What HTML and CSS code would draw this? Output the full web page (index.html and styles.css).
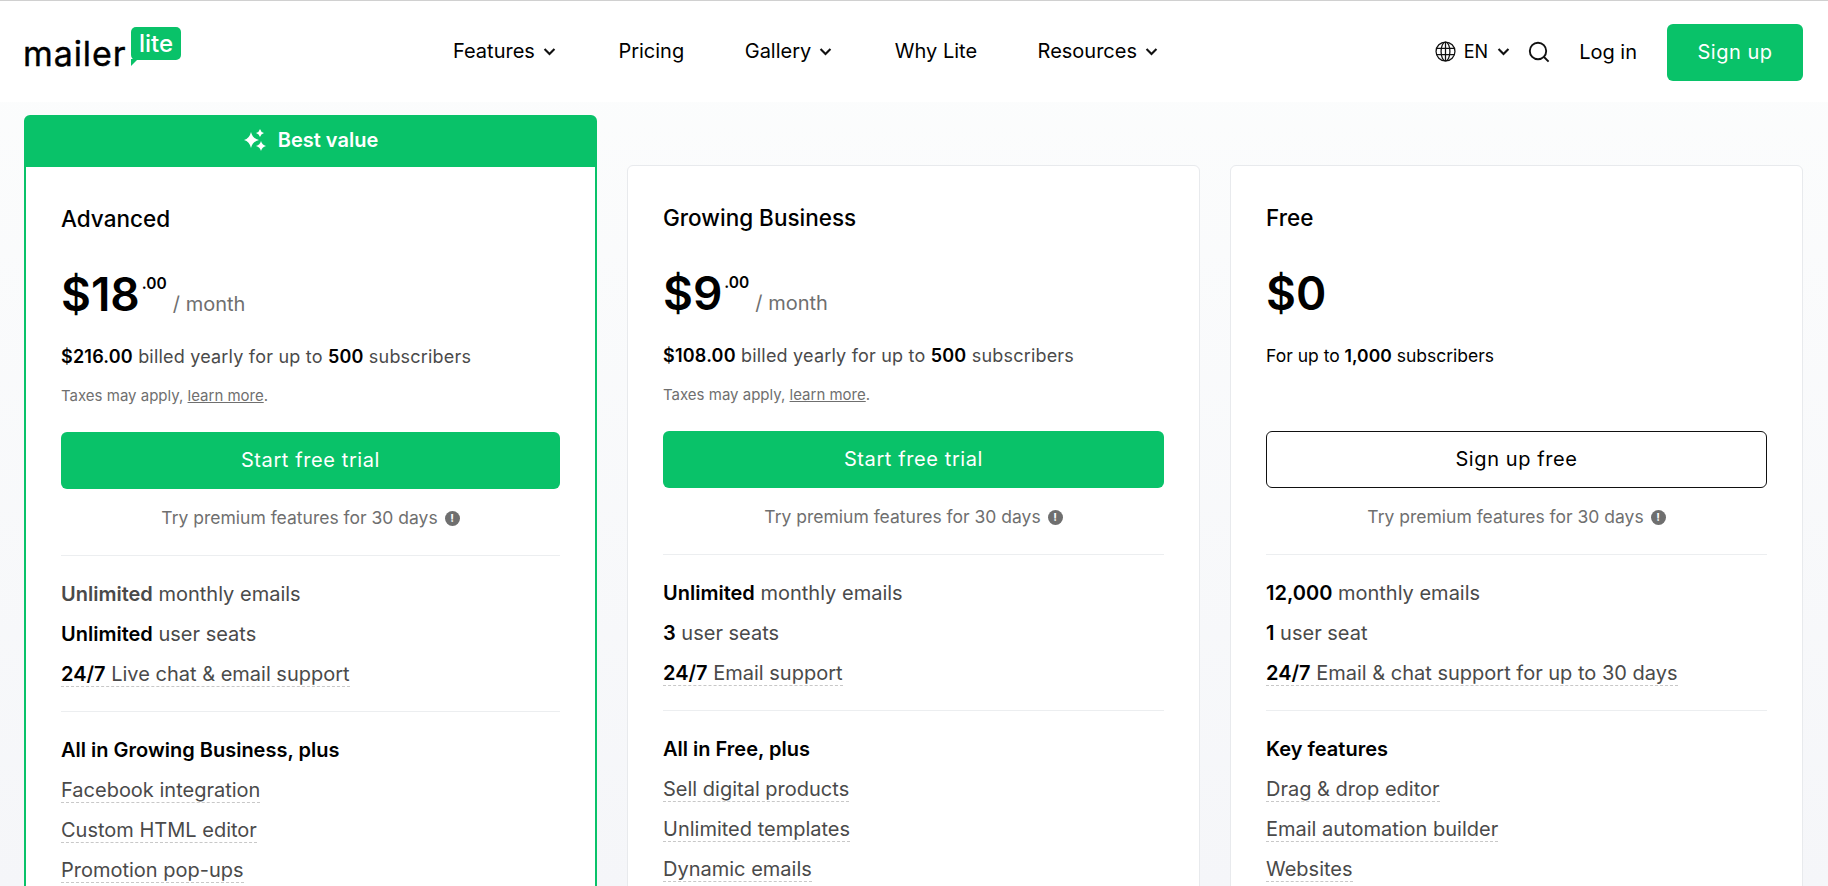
FILE: index.html
```html
<!DOCTYPE html>
<html lang="en">
<head>
    <meta charset="UTF-8">
    <meta name="viewport" content="width=device-width, initial-scale=1.0">
    <title>MailerLite Pricing</title>
    <link rel="stylesheet" href="styles.css">
</head>
<body>
    <!-- Header -->
    <header class="header">
        <a class="logo" href="#">
            <span class="logo-word">mailer</span>
            <span class="logo-bubble">lite</span>
        </a>
        <nav class="nav">
            <a href="#">Features <svg class="chevron" viewBox="0 0 12 12"><path d="M2.500 4.200 6 7.700l3.500-3.500"/></svg></a>
            <a href="#">Pricing</a>
            <a href="#">Gallery <svg class="chevron" viewBox="0 0 12 12"><path d="M2.500 4.200 6 7.700l3.500-3.500"/></svg></a>
            <a href="#">Why Lite</a>
            <a href="#">Resources <svg class="chevron" viewBox="0 0 12 12"><path d="M2.500 4.200 6 7.700l3.500-3.500"/></svg></a>
        </nav>
        <div class="header-right">
            <a class="lang" href="#">
                <svg class="globe" viewBox="0 0 20 20"><circle cx="10" cy="10" r="9"/><ellipse cx="10" cy="10" rx="4.200" ry="9"/><path d="M10 1v18M1.600 7h16.800M1.600 13h16.800"/></svg>
                EN
                <svg class="chevron" viewBox="0 0 12 12"><path d="M2.500 4.200 6 7.700l3.500-3.500"/></svg>
            </a>
            <a class="search" href="#"><svg viewBox="0 0 22 22"><circle cx="10" cy="10" r="8.200"/><path d="m16 16 4.600 4.600"/></svg></a>
            <a class="login" href="#">Log in</a>
            <a class="signup" href="#">Sign up</a>
        </div>
    </header>

    <!-- Plans -->
    <main class="plans">
        <section class="plan plan-best">
            <div class="best-label">
                <svg class="sparkle" viewBox="0 0 24 24"><path d="M8 4Q9.500 10.500 16 12 9.500 13.500 8 20 6.500 13.500 1 12 6.500 10.500 8 4ZM17 1Q17.800 4.200 21 5 17.800 5.800 17 9 16.200 5.800 13 5 16.200 4.200 17 1ZM18 13Q19 17 23 18 19 19 18 23 17 19 13 18 17 17 18 13Z"/></svg>
                Best value
            </div>
            <div class="plan-body">
                <h2 class="plan-name">Advanced</h2>
                <div class="price"><span class="amount">$18</span><span class="cents">.00</span><span class="period">/ month</span></div>
                <p class="billing"><b>$216.00</b> billed yearly for up to <b>500</b> subscribers</p>
                <p class="taxes">Taxes may apply, <a href="#">learn more</a>.</p>
                <a class="btn btn-green" href="#">Start free trial</a>
                <p class="trial">Try premium features for 30 days <span class="info">!</span></p>
                <hr>
                <ul class="list">
                    <li class="soft"><b>Unlimited</b> monthly emails</li>
                    <li><b>Unlimited</b> user seats</li>
                    <li><span class="dash"><b>24/7</b> Live chat &amp; email support</span></li>
                </ul>
                <hr>
                <ul class="list">
                    <li class="list-title">All in Growing Business, plus</li>
                    <li><span class="dash">Facebook integration</span></li>
                    <li><span class="dash">Custom HTML editor</span></li>
                    <li><span class="dash">Promotion pop-ups</span></li>
                </ul>
            </div>
        </section>

        <section class="plan">
            <div class="plan-body">
                <h2 class="plan-name">Growing Business</h2>
                <div class="price"><span class="amount">$9</span><span class="cents">.00</span><span class="period">/ month</span></div>
                <p class="billing"><b>$108.00</b> billed yearly for up to <b>500</b> subscribers</p>
                <p class="taxes">Taxes may apply, <a href="#">learn more</a>.</p>
                <a class="btn btn-green" href="#">Start free trial</a>
                <p class="trial">Try premium features for 30 days <span class="info">!</span></p>
                <hr>
                <ul class="list">
                    <li><b>Unlimited</b> monthly emails</li>
                    <li><b>3</b> user seats</li>
                    <li><span class="dash"><b>24/7</b> Email support</span></li>
                </ul>
                <hr>
                <ul class="list">
                    <li class="list-title">All in Free, plus</li>
                    <li><span class="dash">Sell digital products</span></li>
                    <li><span class="dash">Unlimited templates</span></li>
                    <li><span class="dash">Dynamic emails</span></li>
                </ul>
            </div>
        </section>

        <section class="plan">
            <div class="plan-body">
                <h2 class="plan-name">Free</h2>
                <div class="price"><span class="amount">$0</span></div>
                <p class="billing billing-free">For up to <b>1,000</b> subscribers</p>
                <p class="taxes taxes-empty"></p>
                <a class="btn btn-outline" href="#">Sign up free</a>
                <p class="trial">Try premium features for 30 days <span class="info">!</span></p>
                <hr>
                <ul class="list">
                    <li><b>12,000</b> monthly emails</li>
                    <li><b>1</b> user seat</li>
                    <li><span class="dash"><b>24/7</b> Email &amp; chat support for up to 30 days</span></li>
                </ul>
                <hr>
                <ul class="list">
                    <li class="list-title">Key features</li>
                    <li><span class="dash">Drag &amp; drop editor</span></li>
                    <li><span class="dash">Email automation builder</span></li>
                    <li><span class="dash">Websites</span></li>
                </ul>
            </div>
        </section>
    </main>
</body>
</html>
```

FILE: styles.css
```css
* {
    box-sizing: border-box;
}

html, body {
    height: 100%;
}

body {
    margin: 0;
    display: flex;
    flex-direction: column;
    overflow: hidden;
    font-family: Inter, "Liberation Sans", sans-serif;
    color: #000;
    background: linear-gradient(#fcfdfd, #f5f6f9);
}

a {
    color: inherit;
    text-decoration: none;
}

/* Header */
.header {
    flex: none;
    display: flex;
    align-items: center;
    height: 102px;
    padding: 0 25px 0 23px;
    background-color: white;
    border-top: 1px solid #d0d0d0;
}

.logo {
    display: flex;
    align-items: flex-end;
    gap: 5px;
    width: 430px;
    margin-top: -4px;
}

.logo-word {
    width: 103px;
    margin-bottom: 1px;
    font-size: 34px;
    font-weight: 400;
    -webkit-text-stroke: 0.4px #000;
    line-height: 34px;
    letter-spacing: 0.9px;
}

.logo-bubble {
    position: relative;
    width: 50px;
    height: 33px;
    margin-bottom: 12px;
    padding-left: 8px;
    font-size: 24px;
    font-weight: 500;
    line-height: 33px;
    color: white;
    background-color: #09c269;
    border-radius: 5px;
}

.logo-bubble::after {
    content: "";
    position: absolute;
    left: 0;
    top: 32px;
    border-top: 7px solid #09c269;
    border-right: 7px solid transparent;
}

.nav {
    display: flex;
    align-items: center;
    gap: 60.500px;
    font-size: 20px;
    margin-top: -1px;
}

.nav a {
    display: flex;
    align-items: center;
    gap: 6px;
}

.chevron {
    width: 17px;
    height: 17px;
    fill: none;
    stroke: #111;
    stroke-width: 1.500;
}

.header-right {
    display: flex;
    align-items: center;
    margin-left: auto;
}

.lang {
    display: flex;
    align-items: center;
    gap: 8px;
    font-size: 18px;
}

.globe {
    width: 21px;
    height: 21px;
    fill: none;
    stroke: #111;
    stroke-width: 1.200;
}

.lang .chevron {
    margin-left: -1px;
}

.search {
    display: flex;
    margin-left: 16px;
}

.search svg {
    width: 22px;
    height: 22px;
    fill: none;
    stroke: #111;
    stroke-width: 1.900;
}

.login {
    margin-left: 29px;
    font-size: 20px;
}

.signup {
    display: flex;
    align-items: center;
    justify-content: center;
    width: 136px;
    height: 57px;
    margin: 2px 0 0 30px;
    padding-bottom: 2px;
    font-size: 20px;
    letter-spacing: 0.5px;
    color: white;
    background-color: #09c269;
    border-radius: 6px;
}

/* Plans */
.plans {
    flex: 1;
    display: grid;
    grid-template-columns: repeat(3, 573px);
    justify-content: space-between;
    min-height: 0;
    padding: 13px 25px 0 24px;
}

.plan {
    margin-top: 50px;
    margin-bottom: -20px;
    background-color: white;
    border: 1px solid #e8eaed;
    border-radius: 6px;
}

.plan-best {
    margin-top: 0;
    border: 2px solid #09c269;
}

.best-label {
    display: flex;
    align-items: center;
    justify-content: center;
    gap: 11px;
    height: 50px;
    padding-bottom: 4px;
    font-size: 20px;
    font-weight: 600;
    color: white;
    background-color: #09c269;
}

.sparkle {
    width: 24px;
    height: 24px;
    fill: white;
}

.plan-body {
    padding: 38px 35px 0;
}

.plan-name {
    margin: 0;
    font-size: 22.500px;
    font-weight: 500;
    line-height: 28px;
}

.price {
    display: flex;
    align-items: flex-start;
    height: 60px;
    margin-top: 31px;
}

.amount {
    font-size: 46px;
    font-weight: 600;
    line-height: 60px;
}

.cents {
    margin: 10px 0 0 2px;
    font-size: 15.500px;
    font-weight: 600;
    line-height: 20px;
}

.period {
    margin: 27px 0 0 6px;
    font-size: 20px;
    line-height: 26px;
    color: #6f6f6f;
}

.billing {
    margin: 21px 0 0;
    font-size: 18px;
    letter-spacing: 0.2px;
    line-height: 24px;
    color: #4a4a4a;
}

.billing b,
.list b {
    font-weight: 600;
    color: #000;
}

.billing-free {
    font-size: 17.500px;
    letter-spacing: 0;
    color: #000;
}

.taxes {
    height: 20px;
    margin: 17px 0 0;
    font-size: 15px;
    line-height: 20px;
    color: #6f6f6f;
}

.taxes a {
    text-decoration: underline;
}

.btn {
    display: flex;
    align-items: center;
    justify-content: center;
    height: 57px;
    margin-top: 26px;
    padding-bottom: 2px;
    font-size: 20px;
    letter-spacing: 0.6px;
    border-radius: 6px;
}

.btn-green {
    color: white;
    background-color: #09c269;
}

.btn-outline {
    color: #000;
    border: 1px solid #111;
}

.trial {
    display: flex;
    align-items: center;
    justify-content: center;
    gap: 7px;
    margin: 17px 0 0;
    font-size: 17.500px;
    line-height: 24px;
    color: #6f6f6f;
}

.info {
    width: 15px;
    height: 15px;
    font-size: 11px;
    font-weight: 700;
    line-height: 15px;
    text-align: center;
    color: white;
    background-color: #6f6f6f;
    border-radius: 50%;
}

hr {
    height: 1px;
    margin: 25px 0 0;
    background-color: #eceef0;
    border: none;
}

.list {
    margin: 0;
    padding: 24px 0 0;
    list-style: none;
    font-size: 20px;
    color: #4a4a4a;
}

.list li {
    height: 40px;
    line-height: 28px;
}

.list + hr {
    margin-top: 11px;
}

.list .soft b {
    color: #4a4a4a;
}

.list .list-title {
    font-weight: 600;
    color: #000;
}

.dash {
    display: inline-block;
    line-height: 24px;
    border-bottom: 1px dashed #c8c8c8;
}
```
